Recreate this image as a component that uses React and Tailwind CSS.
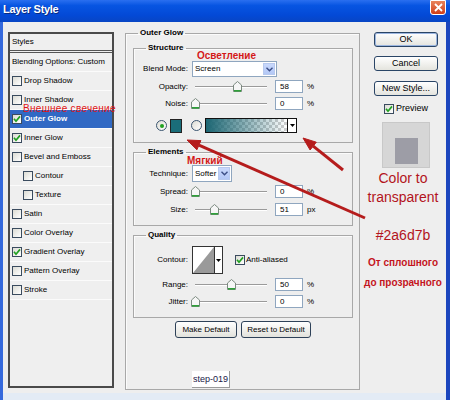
import React from "react";

function Check({ checked }) {
  return (
    <span className="flex w-[10px] h-[10px] shrink-0 items-center justify-center border border-[#3a4b5e] bg-gradient-to-br from-[#dcdcd4] to-white">
      {checked && (
        <svg width="8" height="8" viewBox="0 0 8 8">
          <path d="M1 3.8 L3 6.2 L7 1.4" stroke="#21a121" strokeWidth="1.7" fill="none" />
        </svg>
      )}
    </span>
  );
}

function Radio({ on }) {
  return (
    <span className="flex w-[11px] h-[11px] shrink-0 items-center justify-center rounded-full border border-[#3a5570] bg-gradient-to-br from-[#dcdcd4] to-white">
      {on && <span className="w-[4px] h-[4px] rounded-full bg-[#21a121]" />}
    </span>
  );
}

function Slider({ f }) {
  return (
    <div className="relative w-[79px] h-[13px] shrink-0">
      <div className="absolute left-[3px] top-[6px] w-[72px] h-[2px] border-t border-b border-t-[#9a9a9a] border-b-white" />
      <svg
        className="absolute top-[1px]"
        style={{ left: 3 + f * 72 - 4 }}
        width="9"
        height="11"
        viewBox="0 0 9 11"
      >
        <path d="M0.5 4 L4.5 0.5 L8.5 4 L8.5 10.5 L0.5 10.5 Z" fill="#f6f6f6" stroke="#7c8a80" />
        <path d="M1 9.8 H8" stroke="#2fa03a" strokeWidth="1.6" />
      </svg>
    </div>
  );
}

function Num({ v }) {
  return (
    <div className="ml-[4px] flex w-[28px] h-[13px] items-center border border-[#8fa6bf] bg-white pl-[4px]">
      {v}
    </div>
  );
}

function Label({ children }) {
  return <div className="w-[54px] shrink-0 text-right">{children}</div>;
}

function SliderRow({ label, f, v, unit, className }) {
  return (
    <div className={"flex h-[13px] items-center " + className}>
      <Label>{label}</Label>
      <div className="ml-[4px] flex items-center">
        <Slider f={f} />
        <Num v={v} />
        <span className="ml-[4px]">{unit}</span>
      </div>
    </div>
  );
}

function DropBtn() {
  return (
    <div className="flex w-[12px] h-full items-center justify-center border border-[#b7c9ee] bg-gradient-to-b from-[#c9d8fc] to-[#b3c8f6]">
      <svg width="7" height="5" viewBox="0 0 7 5">
        <path d="M0.5 0.8 L3.5 3.8 L6.5 0.8" stroke="#3b4e86" strokeWidth="1.4" fill="none" />
      </svg>
    </div>
  );
}

function Legend({ children, ml }) {
  return (
    <legend className={"px-[2px] font-bold leading-[10px] " + ml}>{children}</legend>
  );
}

function Btn({ children, w }) {
  return (
    <button
      className={
        "flex h-[17px] items-center justify-center rounded-[3px] border border-[#2e4158] bg-gradient-to-b from-white to-[#e2e2dc] text-[8px] " +
        w
      }
    >
      {children}
    </button>
  );
}

function RightBtn({ children, className }) {
  return (
    <button
      className={
        "flex w-[64px] h-[15px] items-center justify-center rounded-[3px] border border-[#2a4566] bg-gradient-to-b from-white to-[#e4e4de] text-[9px] " +
        className
      }
    >
      {children}
    </button>
  );
}

const items = [
  { label: "Drop Shadow" },
  { label: "Inner Shadow" },
  { label: "Outer Glow", checked: true, selected: true },
  { label: "Inner Glow", checked: true },
  { label: "Bevel and Emboss" },
  { label: "Contour", indent: true },
  { label: "Texture", indent: true },
  { label: "Satin" },
  { label: "Color Overlay" },
  { label: "Gradient Overlay", checked: true },
  { label: "Pattern Overlay" },
  { label: "Stroke" },
];

export default function App() {
  return (
    <div className="relative w-[450px] h-[400px] overflow-hidden bg-[#eeeeee] font-['Liberation_Sans',Arial,sans-serif] text-[8px] leading-none text-black">
      {/* title bar */}
      <div className="flex h-[22px] items-start justify-between bg-[linear-gradient(to_bottom,#2a6ff0,#0755e2_25%,#0349d6_70%,#0845c4)] pr-[4px]">
        <span className="pl-[3px] pt-[2px] text-[11px] font-bold leading-[14px] tracking-[-0.3px] text-white [text-shadow:1px_1px_0_#0a2a80]">
          Layer Style
        </span>
        <span className="flex w-[16px] h-[15px] items-center justify-center rounded-b-[3px] border border-white bg-gradient-to-b from-[#e8825a] to-[#d03c14]">
          <svg width="9" height="9" viewBox="0 0 9 9">
            <path d="M1 1 L8 8 M8 1 L1 8" stroke="white" strokeWidth="1.8" />
          </svg>
        </span>
      </div>

      {/* body */}
      <div className="flex h-[378px] flex-col border-l-[3px] border-r-[4px] border-l-[#3569dc] border-r-[#1b45bd]">
        <div className="flex h-[371px] pl-[5px]">
          {/* styles list */}
          <div className="mt-[10px] flex w-[106px] h-[356px] shrink-0 flex-col border-2 border-[#4a4a4a] bg-[#efefef]">
            <div className="flex h-[19px] shrink-0 items-center border-b-[3px] border-double border-[#555555] pl-[2px]">
              Styles
            </div>
            <div className="flex h-[19px] shrink-0 items-center border-b border-[#fbfbfb] pl-[2px]">
              Blending Options: Custom
            </div>
            {items.map((it) => (
              <div
                key={it.label}
                className={
                  "flex h-[19px] shrink-0 items-center gap-[2px] border-b border-[#fbfbfb] " +
                  (it.indent ? "pl-[13px] " : "pl-[2px] ") +
                  (it.selected ? "bg-[#3169c4] font-bold text-white" : "")
                }
              >
                <Check checked={it.checked} />
                <span>{it.label}</span>
              </div>
            ))}
          </div>

          {/* main settings */}
          <fieldset className="ml-[11px] mt-[6px] w-[235px] h-[362px] shrink-0 border border-[#a8a8a8] shadow-[inset_1px_1px_0_#fbfbfb]">
            <Legend ml="ml-[12px]">Outer Glow</Legend>
            <div className="flex flex-col pl-[7px] pr-[6px] pt-[5px]">
              {/* Structure */}
              <fieldset className="w-[220px] border border-[#a8a8a8] shadow-[inset_1px_1px_0_#fbfbfb]">
                <Legend ml="ml-[12px]">Structure</Legend>
                <div className="flex flex-col pb-[9px]">
                  <div className="mt-[8px] flex h-[16px] items-center">
                    <Label>Blend Mode:</Label>
                    <div className="ml-[4px] flex w-[85px] h-[16px] items-center justify-between border border-[#8fa6bf] bg-white pl-[2px] pr-[1px] py-[1px]">
                      <span>Screen</span>
                      <DropBtn />
                    </div>
                  </div>
                  <SliderRow label="Opacity:" f={0.58} v="58" unit="%" className="mt-[3px]" />
                  <SliderRow label="Noise:" f={0} v="0" unit="%" className="mt-[4px]" />
                  <div className="mt-[8px] flex h-[15px] items-center pl-[22px]">
                    <Radio on />
                    <div className="ml-[3px] w-[12px] h-[14px] border border-[#222] bg-[#1a6d79]" />
                    <div className="ml-[9px]">
                      <Radio />
                    </div>
                    <div className="ml-[3px] flex w-[92px] h-[15px] border border-[#111]">
                      <div className="flex-1 bg-[linear-gradient(to_right,#1c6673,rgba(42,109,123,0)),repeating-conic-gradient(#cfcfcf_0_25%,#ffffff_0_50%)] [background-size:100%_100%,6px_6px]" />
                      <div className="flex w-[9px] items-center justify-center border-l border-[#111] bg-white">
                        <svg width="5" height="3" viewBox="0 0 5 3">
                          <path d="M0 0 H5 L2.5 3 Z" fill="#000" />
                        </svg>
                      </div>
                    </div>
                  </div>
                </div>
              </fieldset>

              {/* Elements */}
              <fieldset className="mt-[4px] w-[220px] border border-[#a8a8a8] shadow-[inset_1px_1px_0_#fbfbfb]">
                <Legend ml="ml-[12px]">Elements</Legend>
                <div className="flex flex-col pb-[9px]">
                  <div className="mt-[8px] flex h-[17px] items-center">
                    <Label>Technique:</Label>
                    <div className="ml-[4px] flex w-[40px] h-[17px] items-center justify-between border border-[#8fa6bf] bg-white pl-[2px] pr-[1px] py-[1px]">
                      <span>Softer</span>
                      <DropBtn />
                    </div>
                  </div>
                  <SliderRow label="Spread:" f={0} v="0" unit="%" className="mt-[3px]" />
                  <SliderRow label="Size:" f={0.26} v="51" unit="px" className="mt-[5px]" />
                </div>
              </fieldset>

              {/* Quality */}
              <fieldset className="mt-[4px] w-[220px] border border-[#a8a8a8] shadow-[inset_1px_1px_0_#fbfbfb]">
                <Legend ml="ml-[12px]">Quality</Legend>
                <div className="flex flex-col pb-[9px]">
                  <div className="mt-[6px] flex h-[28px] items-center">
                    <Label>Contour:</Label>
                    <div className="ml-[4px] flex w-[31px] h-[28px] border border-[#333] bg-white">
                      <svg className="flex-1" width="21" height="26" viewBox="0 0 21 26" preserveAspectRatio="none">
                        <path d="M0 26 L21 0 L21 26 Z" fill="#9a9a9a" />
                      </svg>
                      <div className="flex w-[8px] items-center justify-center border-l border-[#333] bg-white">
                        <svg width="5" height="3" viewBox="0 0 5 3">
                          <path d="M0 0 H5 L2.5 3 Z" fill="#000" />
                        </svg>
                      </div>
                    </div>
                    <div className="ml-[12px] flex items-center gap-[1px]">
                      <Check checked />
                      <span>Anti-aliased</span>
                    </div>
                  </div>
                  <SliderRow label="Range:" f={0.5} v="50" unit="%" className="mt-[4px]" />
                  <SliderRow label="Jitter:" f={0} v="0" unit="%" className="mt-[4px]" />
                </div>
              </fieldset>

              <div className="mt-[3px] flex justify-center gap-[4px]">
                <Btn w="w-[62px]">Make Default</Btn>
                <Btn w="w-[70px]">Reset to Default</Btn>
              </div>

              <div className="ml-[59px] mt-[33px] flex w-[38px] h-[17px] items-center justify-center border-r border-b border-[#9a9a9a] bg-white text-[9px] text-[#202048]">
                step-019
              </div>
            </div>
          </fieldset>

          {/* right column */}
          <div className="ml-[14px] mt-[10px] flex w-[64px] shrink-0 flex-col items-center">
            <RightBtn className="border-[#1e3f75] shadow-[inset_0_0_0_1px_#9cb6e0]">OK</RightBtn>
            <RightBtn className="mt-[9px]">Cancel</RightBtn>
            <RightBtn className="mt-[10px]">New Style...</RightBtn>
            <div className="mt-[7px] flex h-[11px] items-center gap-[2px] text-[9px]">
              <Check checked />
              <span>Preview</span>
            </div>
            <div className="mt-[8px] flex w-[48px] h-[46px] items-start border border-[#c8c8c8] bg-[#d6d6d6] pl-[12px] pt-[15px]">
              <div className="w-[23px] h-[26px] bg-[#9d9da6]" />
            </div>
            <div className="flex w-full flex-col items-center pr-[6px] whitespace-nowrap text-[#b3141c]">
              <div className="mt-[2px] text-[14px] leading-[16px]">Color to</div>
              <div className="mt-[3px] text-[14px] leading-[16px]">transparent</div>
              <div className="mt-[22px] text-[14px] leading-[16px]">#2a6d7b</div>
              <div className="mt-[14px] text-[10px] font-bold leading-[12px] text-[#c4141c]">От сплошного</div>
              <div className="mt-[8px] text-[10px] font-bold leading-[12px] text-[#c4141c]">до прозрачного</div>
            </div>
          </div>
        </div>
        <div className="h-[7px] bg-[#e3ebf5]" />
      </div>

      {/* annotations */}
      <div className="absolute left-[23px] top-[103px] text-[10px] leading-[12px] tracking-[0.3px] text-[#e01414]">
        Внешнее свечение
      </div>
      <div className="absolute left-[197px] top-[50px] text-[10px] font-bold leading-[12px] text-[#d41818]">
        Осветление
      </div>
      <div className="absolute left-[187px] top-[155px] text-[10px] font-bold leading-[12px] text-[#d41818]">
        Мягкий
      </div>
      <svg className="pointer-events-none absolute left-0 top-0" width="450" height="400" viewBox="0 0 450 400">
        <g fill="#b51c1c" stroke="#b51c1c">
          <line x1="365" y1="218" x2="198.9" y2="145.2" strokeWidth="3" />
          <polygon points="187,140 200.9,140.6 196.9,149.8" strokeWidth="1" />
          <line x1="343" y1="170" x2="313.2" y2="146.1" strokeWidth="3" />
          <polygon points="303,138 316.3,142.2 310.1,150" strokeWidth="1" />
        </g>
      </svg>
    </div>
  );
}
